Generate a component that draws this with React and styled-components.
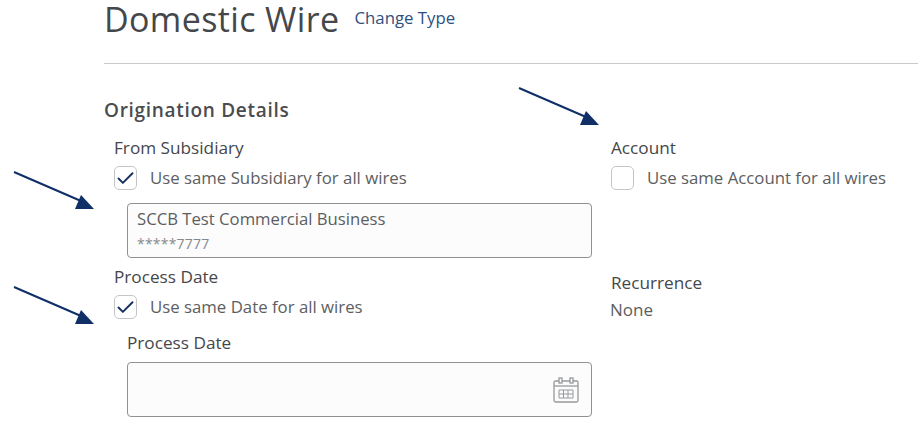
import React from "react";
import styled, { createGlobalStyle } from "styled-components";
import { Check } from "lucide-react";

const GlobalStyle = createGlobalStyle`
 html, body {
  margin: 0;
  background: #ffffff;
  font-family: "Open Sans", "Liberation Sans", sans-serif;
 }
`;

const Page = styled.div`
 position: relative;
 width: 920px;
 height: 424px;
 overflow: hidden;
 padding-left: 104px;
 box-sizing: border-box;
`;

const Header = styled.div`
 display: flex;
 align-items: flex-start;
 gap: 15px;
 height: 63px;
 margin-right: 2px;
 border-bottom: 1px solid #c9cacb;
`;

const Title = styled.h1`
 margin: 0;
 font-size: 34px;
 line-height: 38px;
 font-weight: 400;
 letter-spacing: 0.37px;
 color: #45474a;
`;

const ChangeType = styled.a`
 margin-top: 8px;
 font-size: 16.8px;
 line-height: 20px;
 color: #2f4f7f;
`;

const SectionTitle = styled.h2`
 margin: 35px 0 0;
 font-size: 19px;
 line-height: 22px;
 font-weight: 600;
 letter-spacing: 0.7px;
 color: #4a4c4f;
`;

const Columns = styled.div`
 display: grid;
 grid-template-columns: 497px 1fr;
 padding: 17px 0 0 10px;
`;

const Column = styled.div`
 display: flex;
 flex-direction: column;
`;

const FieldLabel = styled.div`
 font-size: 17.2px;
 line-height: 20px;
 color: #45474a;
 margin-left: ${(p) => p.$indent || 0}px;
`;

const CheckRow = styled.label`
 display: flex;
 align-items: center;
 gap: 13px;
 height: 24px;
 margin-top: 8px;
 font-size: 16.8px;
 color: #5c5e61;
`;

const CheckText = styled.span`
 margin-top: -2px;
`;

const Box = styled.span`
 display: flex;
 align-items: center;
 justify-content: center;
 width: 23px;
 height: 24px;
 box-sizing: border-box;
 border: 1.5px solid #c4c5c7;
 border-radius: 5px;
 color: #14315f;
`;

const FieldBox = styled.div`
 box-sizing: border-box;
 display: flex;
 align-items: center;
 justify-content: space-between;
 width: 465px;
 height: 55px;
 margin-left: 13px;
 padding: 0 11px 0 9px;
 border: 1px solid #8f9194;
 border-radius: 4px;
 background: #fcfcfc;
`;

const AccountName = styled.div`
 font-size: 16.7px;
 line-height: 22px;
 color: #5c5e61;
`;

const AccountNumber = styled.div`
 font-size: 14px;
 line-height: 18px;
 letter-spacing: 0.2px;
 margin-top: 5px;
 color: #86888b;
`;

const Group = styled.div`
 margin-top: ${(p) => p.$top || 0}px;
`;

const Plain = styled.div`
 font-size: 17px;
 line-height: 20px;
 margin: 7px 0 0 -1px;
 color: #5c5e61;
`;

const Arrow = styled.svg`
 position: absolute;
 left: ${(p) => p.$x}px;
 top: ${(p) => p.$y}px;
`;

const Pointer = ({ x, y }) => (
 <Arrow $x={x} $y={y} width="82" height="40" viewBox="0 0 82 40">
  <path d="M1 1 L68 30" stroke="#0f2f66" strokeWidth="2" fill="none" />
  <path d="M68 24 L81 38 L62 38 Z" fill="#0f2f66" />
 </Arrow>
);

const CalendarIcon = () => (
 <svg width="28" height="28" viewBox="0 0 28 28" fill="none" stroke="#97999b" strokeWidth="1.3">
  <rect x="2" y="5" width="24" height="21" rx="1.5" />
  <path d="M2 10 H26" />
  <rect x="7" y="2" width="3" height="5" fill="#fff" />
  <rect x="18" y="2" width="3" height="5" fill="#fff" />
  <path d="M7 14 H21 V22 H7 Z M7 18 H21 M11.5 14 V22 M16 14 V22" strokeWidth="1" />
 </svg>
);

const CheckItem = ({ checked, children }) => (
 <CheckRow>
  <Box>{checked && <Check size={21} strokeWidth={2.2} />}</Box>
  <CheckText>{children}</CheckText>
 </CheckRow>
);

export default function App() {
 return (
  <Page>
   <GlobalStyle />
   <Header>
    <Title>Domestic Wire</Title>
    <ChangeType>Change Type</ChangeType>
   </Header>
   <SectionTitle>Origination Details</SectionTitle>
   <Columns>
    <Column>
     <FieldLabel>From Subsidiary</FieldLabel>
     <CheckItem checked>Use same Subsidiary for all wires</CheckItem>
     <Group $top={13}>
      <FieldBox>
       <div>
        <AccountName>SCCB Test Commercial Business</AccountName>
        <AccountNumber>*****7777</AccountNumber>
       </div>
      </FieldBox>
     </Group>
     <Group $top={9}>
      <FieldLabel>Process Date</FieldLabel>
      <CheckItem checked>Use same Date for all wires</CheckItem>
     </Group>
     <Group $top={14}>
      <FieldLabel $indent={13}>Process Date</FieldLabel>
     </Group>
     <Group $top={9}>
      <FieldBox>
       <span />
       <CalendarIcon />
      </FieldBox>
     </Group>
    </Column>
    <Column>
     <FieldLabel>Account</FieldLabel>
     <CheckItem>Use same Account for all wires</CheckItem>
     <Group $top={83}>
      <FieldLabel>Recurrence</FieldLabel>
      <Plain>None</Plain>
     </Group>
    </Column>
   </Columns>
   <Pointer x={518} y={87} />
   <Pointer x={13} y={171} />
   <Pointer x={13} y={286} />
  </Page>
 );
}
